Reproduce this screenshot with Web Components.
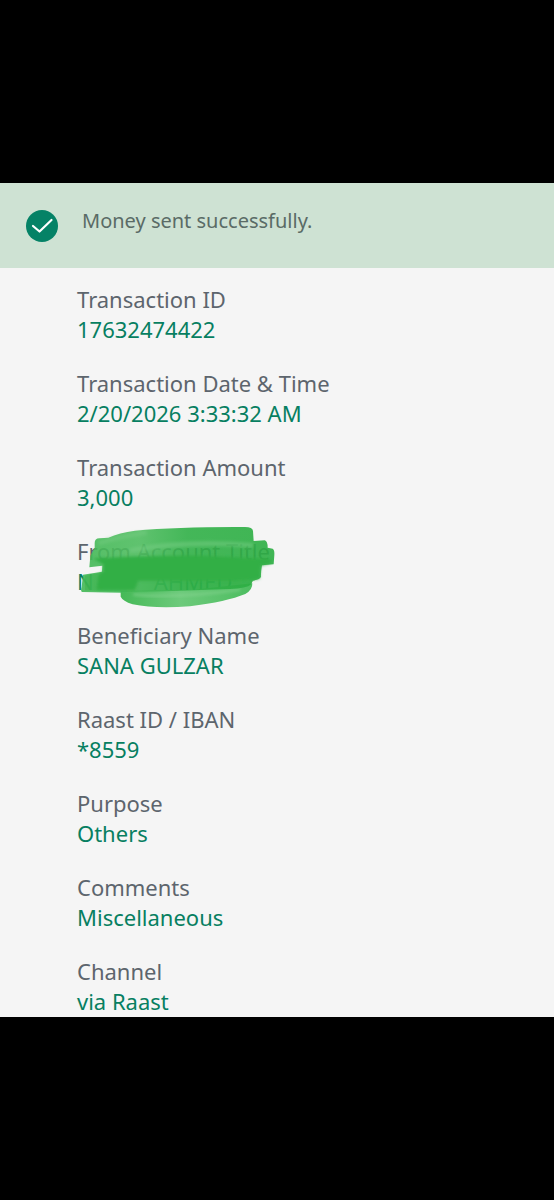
<!DOCTYPE html>
<html lang="en">
<head>
<meta charset="utf-8">
<meta name="viewport" content="width=device-width, initial-scale=1">
<title>Money sent</title>
<style>
body { margin: 0; background: #000; font-family: "Noto Sans", sans-serif; }
</style>
</head>
<body>
<receipt-page></receipt-page>
<script>
const define = (name, html) => customElements.define(name, class extends HTMLElement {
  constructor() {
    super();
    this.attachShadow({ mode: 'open' }).innerHTML = html;
  }
});

define('success-banner', `
<style>
:host { display: flex; align-items: flex-start; gap: 24px; box-sizing: border-box; min-height: 85px; padding: 24px 26px; background: #cee2d3; color: #5a6b66; font-size: 20px; line-height: 28px; }
svg { flex: none; width: 32px; height: 32px; margin-top: 3px; }
p { margin: 0; }
</style>
<svg viewBox="0 0 32 32" aria-hidden="true"><circle cx="16" cy="16" r="16" fill="#058266"/><path d="M7 16 13.500 21.500 25.500 10" fill="none" stroke="#fff" stroke-width="2.200" stroke-linecap="round" stroke-linejoin="round"/></svg>
<p><slot></slot></p>`);

define('detail-item', `
<style>
:host { display: block; position: relative; font-size: 22px; line-height: 30px; }
.label { color: #5d656d; }
.value { color: #077f61; }
</style>
<div class="label"><slot name="label"></slot></div>
<div class="value"><slot></slot></div>
<slot name="overlay"></slot>`);

define('marker-scribble', `
<style>
:host { position: absolute; left: -17px; top: -21px; width: 230px; height: 100px; }
svg { display: block; width: 100%; height: 100%; }
</style>
<svg viewBox="0 0 690 300" aria-hidden="true">
<defs>
<linearGradient id="top" x1="0" y1="0" x2="1" y2="0"><stop offset="0" stop-color="#42b855"/><stop offset=".3" stop-color="#4fbd60"/><stop offset=".55" stop-color="#30b047"/><stop offset="1" stop-color="#2bae42"/></linearGradient>
<linearGradient id="low" x1="0" y1="0" x2="1" y2="0"><stop offset="0" stop-color="#45b957"/><stop offset=".45" stop-color="#6dca7b"/><stop offset="1" stop-color="#4dbd60"/></linearGradient>
<filter id="soft" x="-10%" y="-30%" width="120%" height="160%"><feGaussianBlur stdDeviation="4"/></filter>
</defs>
<path d="M182 228 182 245Q188 258 218 268 285 282 390 274 500 260 556 237 578 225 577 205L400 224Z" fill="url(#low)"/>
<path d="M220 238Q340 252 540 224" fill="none" stroke="#8bd695" stroke-width="8" opacity=".5" filter="url(#soft)"/>
<path d="M104 84Q104 69 120 70L145 68Q178 53 225 47 360 35 555 36 578 36 579 48L581 78 614 76Q623 78 623 98L638 101Q644 104 643 120L641 148 606 151Q602 175 603 185 600 193 578 197L574 208Q560 221 510 222L185 233 66 231Q61 228 65 216L69 179 126 170 127 152 88 157 91 122 104 98Z" fill="url(#top)" opacity=".9"/>
<path d="M115 85Q170 66 260 52" fill="none" stroke="#7fd08a" stroke-width="14" opacity=".35" filter="url(#soft)"/>
<path d="M210 100Q380 66 580 84L578 98Q400 84 210 112Z" fill="#78ce85" opacity=".5" filter="url(#soft)"/>
<path d="M75 182 130 172 300 180 598 180 570 208 510 220 200 230 75 226Z" fill="#31b047" opacity=".4"/>
<path d="M98 130Q300 120 430 122L632 132 632 145 601 152 598 192 520 197 235 197 224 226 110 225 115 180 130 170 130 148Z" fill="#31af45" filter="url(#soft)"/>
</svg>`);

define('receipt-page', `
<style>
:host { display: flex; flex-direction: column; justify-content: center; min-height: 100vh; }
main { background: #f5f5f5; }
section { display: grid; gap: 24px; padding: 16px 24px 1px 77px; }
.hidden { display: inline-block; width: 60px; }
</style>
<main>
<success-banner>Money sent successfully.</success-banner>
<section>
<detail-item><span slot="label">Transaction ID</span>17632474422</detail-item>
<detail-item><span slot="label">Transaction Date &amp; Time</span>2/20/2026 3:33:32 AM</detail-item>
<detail-item><span slot="label">Transaction Amount</span>3,000</detail-item>
<detail-item><span slot="label">From Account Title</span>N<span class="hidden"></span>AHMED<marker-scribble slot="overlay"></marker-scribble></detail-item>
<detail-item><span slot="label">Beneficiary Name</span>SANA GULZAR</detail-item>
<detail-item><span slot="label">Raast ID / IBAN</span>*8559</detail-item>
<detail-item><span slot="label">Purpose</span>Others</detail-item>
<detail-item><span slot="label">Comments</span>Miscellaneous</detail-item>
<detail-item><span slot="label">Channel</span>via Raast</detail-item>
</section>
</main>`);
</script>
</body>
</html>
